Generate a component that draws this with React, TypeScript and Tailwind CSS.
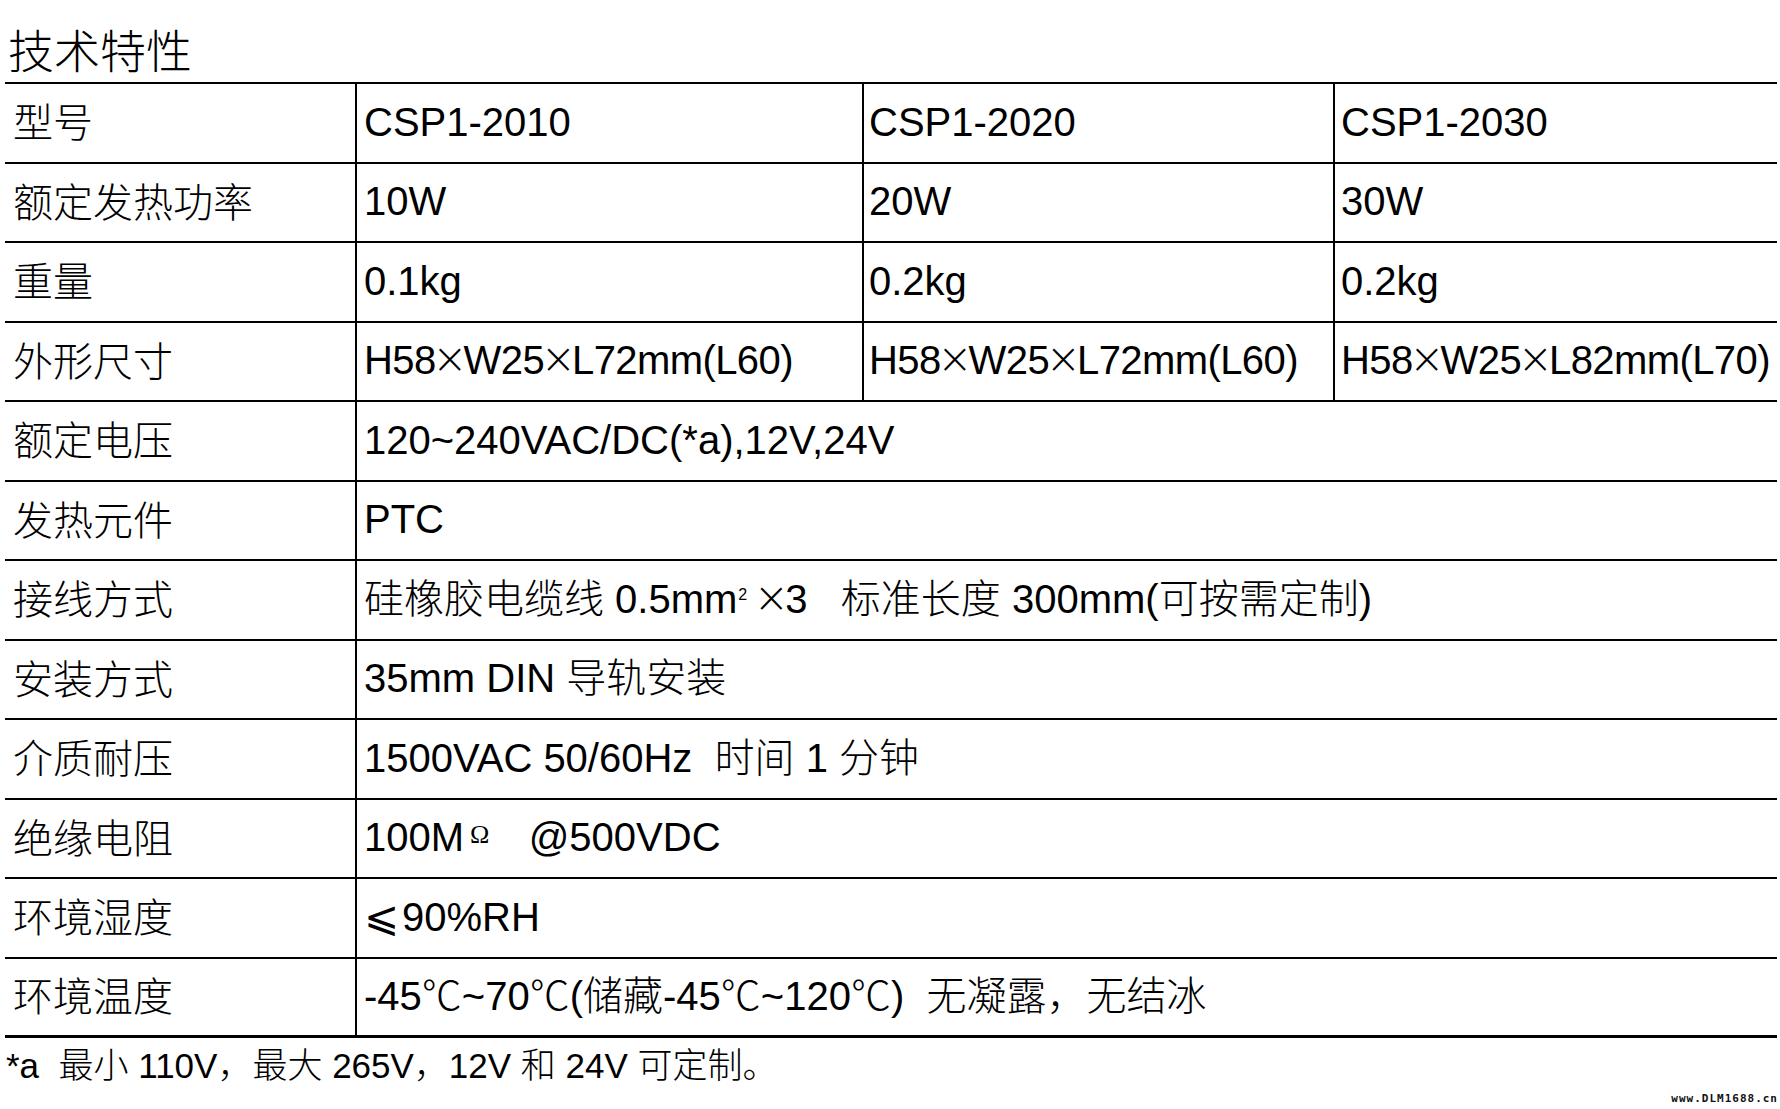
import React from 'react';

const cjk = "font-['Noto_Sans_CJK_SC',sans-serif] font-light";
const latin = "font-['Liberation_Sans','Noto_Sans_CJK_SC',sans-serif] font-light";

// thin multiplication sign with some air on both sides
const X = () => (
  <span className="inline-flex justify-center w-[28px] font-['DejaVu_Sans',sans-serif] font-extralight text-[42px] leading-[40px] relative -top-[1px]">
    ×
  </span>
);

const Size = ({ a, b }: { a: string; b: string }) => (
  <span className="whitespace-nowrap tracking-[-0.6px]">
    H58<X />W25<X />
    {a}mm({b})
  </span>
);

interface Row {
  label: string;
  values: React.ReactNode[];
}

const rows: Row[] = [
  { label: '型号', values: ['CSP1-2010', 'CSP1-2020', 'CSP1-2030'] },
  { label: '额定发热功率', values: ['10W', '20W', '30W'] },
  { label: '重量', values: ['0.1kg', '0.2kg', '0.2kg'] },
  {
    label: '外形尺寸',
    values: [<Size key="1" a="L72" b="L60" />, <Size key="2" a="L72" b="L60" />, <Size key="3" a="L82" b="L70" />],
  },
  { label: '额定电压', values: ['120~240VAC/DC(*a),12V,24V'] },
  { label: '发热元件', values: ['PTC'] },
  {
    label: '接线方式',
    values: [
      <span key="a" className="whitespace-pre flex items-center">
        硅橡胶电缆线 0.5mm
        <span className="text-[16px] self-start mt-[14px] mr-[10px] ml-[1px]">2</span>
        <X />3{'   '}标准长度 300mm(可按需定制)
      </span>,
    ],
  },
  { label: '安装方式', values: ['35mm DIN 导轨安装'] },
  {
    label: '介质耐压',
    values: [<span key="a" className="whitespace-pre">1500VAC 50/60Hz  时间 1 分钟</span>],
  },
  {
    label: '绝缘电阻',
    values: [
      <span key="a" className="whitespace-pre">
        100M
        <span className="font-['Liberation_Serif',serif] text-[26px] relative -top-[8px] mx-[6px]">Ω</span>
        {'   '}@500VDC
      </span>,
    ],
  },
  {
    label: '环境湿度',
    values: [
      <span key="a">
        <span className="font-['DejaVu_Sans',sans-serif] font-extralight text-[42px] leading-none mr-[3px]">⩽</span>90%RH
      </span>,
    ],
  },
  {
    label: '环境温度',
    values: [<span key="a" className="whitespace-pre">-45℃~70℃(储藏-45℃~120℃)  无凝露，无结冰</span>],
  },
];

const App = () => {
  return (
    <div className="w-[1780px] h-[1109px] bg-white text-black relative overflow-hidden">
      {/* Title */}
      <div className={`h-[82px] pl-[8px] pt-[20px] text-[46px] leading-[56px] ${cjk}`}>技术特性</div>

      {/* Table */}
      <div className="ml-[5px] w-[1772px] border-t-[2px] border-black">
        {rows.map((row, i) => (
          <div
            key={row.label}
            className={`flex h-[79.5px] border-black ${i === rows.length - 1 ? 'border-b-[3px]' : 'border-b-[2px]'}`}
          >
            <div className={`w-[352px] shrink-0 border-r-[2px] border-black flex items-center pl-[8px] pb-[5px] text-[40px] ${cjk}`}>
              {row.label}
            </div>
            {row.values.length === 3 ? (
              <>
                <div className={`w-[507px] shrink-0 border-r-[2px] border-black flex items-center pl-[7px] pb-[2px] text-[40px] ${latin}`}>
                  {row.values[0]}
                </div>
                <div className={`w-[471px] shrink-0 border-r-[2px] border-black flex items-center pl-[5px] pb-[2px] text-[40px] ${latin}`}>
                  {row.values[1]}
                </div>
                <div className={`flex-1 flex items-center pl-[6px] pb-[2px] text-[40px] whitespace-nowrap ${latin}`}>
                  {row.values[2]}
                </div>
              </>
            ) : (
              <div className={`flex-1 flex items-center pl-[7px] pb-[2px] text-[40px] ${latin}`}>{row.values[0]}</div>
            )}
          </div>
        ))}
      </div>

      {/* Footnote */}
      <div className={`pl-[6px] pt-[8px] text-[35px] leading-[40px] whitespace-pre ${latin}`}>
        *a  最小 110V，最大 265V，12V 和 24V 可定制。
      </div>

      {/* Watermark */}
      <div className="absolute right-[2px] bottom-[2px] text-[11px] font-bold tracking-[1px] text-[#111] font-['DejaVu_Sans_Mono',monospace]">
        www.DLM1688.cn
      </div>
    </div>
  );
};

export default App;
